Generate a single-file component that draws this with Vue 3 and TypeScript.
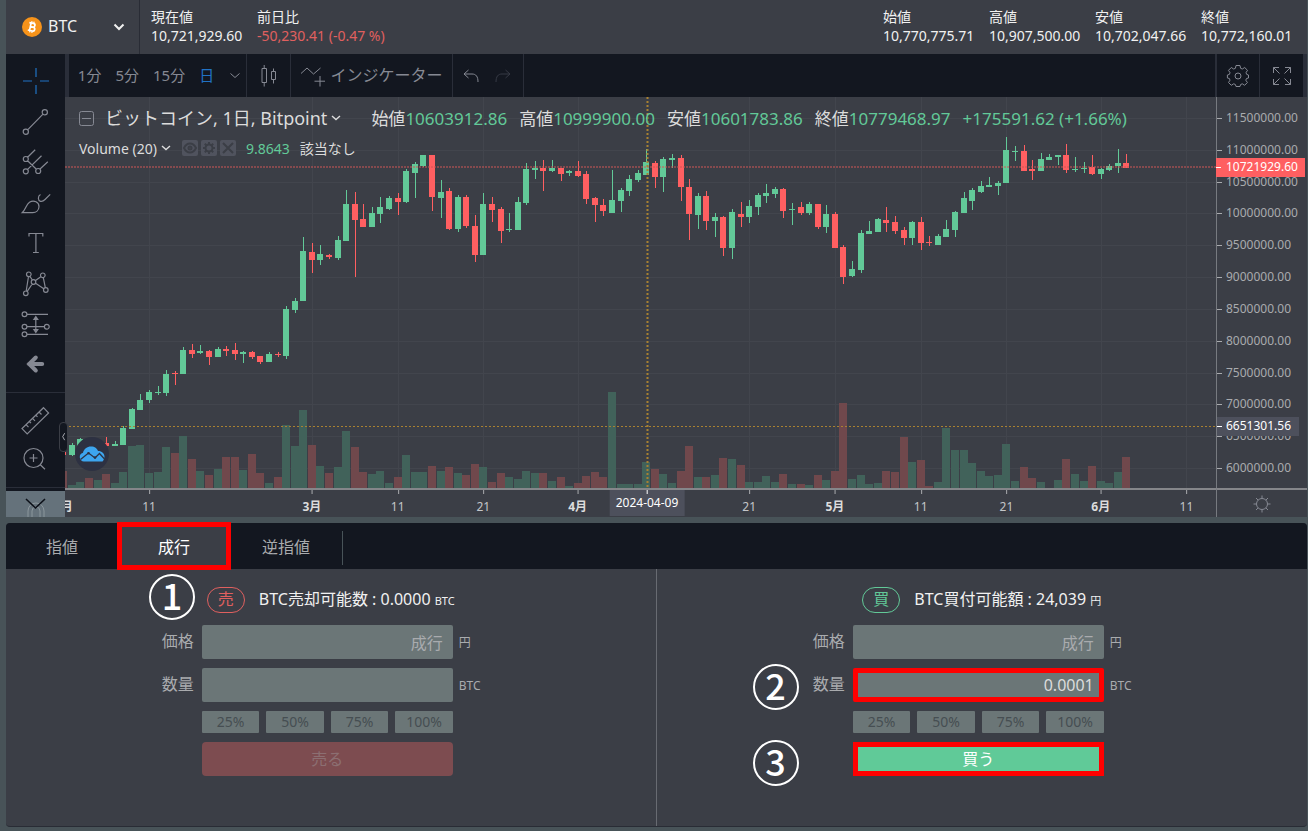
<script setup lang="ts">
import { ref } from 'vue'

type Candle = [top: number, bottom: number, high: number, low: number, up: 0 | 1, volume: number]

const PLOT_W = 1151
const PLOT_H = 391
const PLOT_TOP = 97
const STEP = 8.574
const FIRST_DAY = -10

// One entry per day: body top, body bottom, wick high, wick low, rising, volume bar top
const candles: Candle[] = [
  [452, 455, 451, 456, 0, 471], [445, 455, 443, 456, 1, 485], [439, 452, 438, 454, 1, 482], [440, 447, 438, 450, 0, 478],
  [441, 448, 439, 450, 1, 480], [443, 446, 437, 446, 0, 474], [444, 446, 441, 446, 1, 483], [428, 445, 426, 445, 1, 472],
  [409, 429, 408, 429, 1, 446], [400, 410, 394, 410, 1, 445], [392, 400, 390, 403, 1, 473], [392, 393, 386, 395, 1, 472],
  [374, 393, 370, 396, 1, 447], [373, 374, 371, 385, 0, 453], [350, 374, 347, 374, 1, 436], [350, 354, 344, 358, 0, 459],
  [351, 353, 345, 354, 1, 471], [351, 357, 350, 365, 0, 475], [349, 357, 347, 357, 1, 469], [349, 351, 346, 356, 0, 457],
  [350, 354, 343, 360, 0, 457], [352, 354, 351, 363, 1, 470], [352, 357, 351, 359, 0, 454], [356, 362, 356, 364, 0, 473],
  [354, 362, 352, 362, 1, 483], [354, 355, 352, 357, 0, 477], [309, 356, 306, 359, 1, 425], [301, 310, 298, 313, 1, 446],
  [251, 301, 237, 301, 1, 410], [252, 260, 243, 273, 0, 445], [254, 260, 245, 265, 1, 466], [255, 257, 254, 259, 0, 473],
  [240, 258, 236, 260, 1, 467], [204, 241, 190, 241, 1, 431], [204, 220, 192, 277, 0, 447], [219, 227, 204, 227, 0, 472],
  [213, 227, 207, 227, 1, 474], [207, 214, 197, 223, 1, 471], [198, 209, 196, 210, 1, 483], [198, 202, 193, 215, 0, 477],
  [171, 202, 169, 203, 1, 455], [164, 173, 162, 198, 1, 472], [155, 166, 155, 167, 1, 472], [155, 197, 155, 211, 0, 466],
  [192, 198, 180, 218, 1, 471], [191, 229, 188, 230, 0, 467], [197, 229, 195, 232, 1, 473], [197, 226, 195, 228, 0, 475],
  [226, 255, 215, 262, 0, 464], [204, 255, 193, 255, 1, 467], [204, 210, 197, 222, 0, 482], [209, 231, 207, 243, 0, 473],
  [229, 230, 213, 232, 1, 477], [202, 230, 197, 230, 1, 479], [169, 203, 163, 205, 1, 471], [168, 170, 161, 179, 1, 473],
  [168, 171, 160, 191, 0, 473], [168, 171, 160, 172, 1, 481], [168, 174, 168, 181, 0, 477], [171, 173, 170, 176, 1, 486],
  [171, 176, 161, 177, 0, 483], [174, 199, 171, 204, 0, 476], [198, 205, 197, 222, 0, 472], [205, 211, 199, 216, 0, 477],
  [200, 213, 170, 213, 1, 392], [190, 201, 188, 212, 1, 484], [179, 191, 175, 196, 1, 484], [173, 180, 170, 182, 1, 484],
  [162, 175, 149, 175, 1, 462], [163, 177, 161, 188, 0, 469], [159, 177, 157, 192, 1, 474], [158, 160, 154, 168, 1, 483],
  [158, 187, 155, 201, 0, 471], [187, 214, 179, 240, 0, 446], [196, 215, 193, 229, 1, 477], [196, 221, 191, 230, 0, 477],
  [217, 221, 213, 237, 1, 475], [217, 248, 216, 256, 0, 458], [212, 248, 209, 259, 1, 459], [214, 217, 202, 227, 0, 465],
  [206, 217, 200, 223, 1, 482], [195, 207, 193, 215, 1, 482], [193, 196, 184, 203, 1, 476], [189, 194, 187, 198, 1, 482],
  [189, 211, 188, 218, 0, 474], [209, 210, 203, 225, 1, 484], [207, 213, 202, 215, 0, 484], [204, 213, 202, 215, 1, 485],
  [204, 227, 204, 229, 0, 475], [214, 227, 205, 233, 1, 480], [214, 248, 212, 248, 0, 471], [247, 277, 245, 284, 0, 403],
  [269, 276, 261, 277, 1, 479], [233, 270, 230, 273, 1, 475], [231, 234, 221, 234, 1, 484], [219, 232, 218, 232, 1, 483],
  [220, 223, 207, 232, 0, 471], [222, 231, 216, 234, 0, 472], [230, 238, 227, 245, 0, 437], [222, 238, 221, 245, 1, 462],
  [222, 243, 217, 250, 0, 460], [242, 243, 236, 246, 0, 486], [236, 245, 234, 245, 1, 482], [229, 237, 220, 237, 1, 428],
  [212, 230, 211, 237, 1, 450], [198, 213, 192, 213, 1, 450], [190, 201, 188, 210, 1, 463], [186, 192, 181, 193, 1, 471],
  [185, 187, 177, 187, 1, 476], [183, 186, 181, 195, 1, 475], [150, 183, 137, 183, 1, 444], [151, 152, 146, 161, 1, 481],
  [151, 171, 145, 171, 0, 467], [169, 171, 160, 180, 0, 478], [159, 171, 153, 171, 1, 482], [157, 160, 154, 160, 1, 488],
  [155, 157, 155, 165, 1, 480], [155, 170, 144, 173, 0, 459], [169, 170, 157, 172, 1, 474], [168, 169, 162, 173, 1, 481],
  [167, 174, 155, 175, 0, 466], [169, 174, 168, 179, 1, 481], [166, 170, 164, 171, 1, 483], [163, 166, 149, 173, 1, 472],
  [163, 168, 154, 168, 0, 457],
]

const dayX = (day: number) => 84 + day * STEP
const candleX = (i: number) => Math.round(dayX(i + FIRST_DAY))

const prices = Array.from({ length: 12 }, (_, i) => ({
  text: (11500000 - i * 500000).toFixed(2),
  y: 118 - PLOT_TOP + i * 31.82,
}))
const dates = [
  { text: '2月', day: -10, bold: true },
  { text: '11', day: 0 },
  { text: '3月', day: 19, bold: true },
  { text: '11', day: 29 },
  { text: '21', day: 39 },
  { text: '4月', day: 50, bold: true },
  { text: '21', day: 70 },
  { text: '5月', day: 80, bold: true },
  { text: '11', day: 90 },
  { text: '21', day: 100 },
  { text: '6月', day: 111, bold: true },
  { text: '11', day: 121 },
]
const topPct = (y: number) => ({ top: `${(y / PLOT_H) * 100}%` })
const leftPct = (x: number) => ({ left: `${(x / PLOT_W) * 100}%` })

const summary = [
  { label: '始値', value: '10,770,775.71' },
  { label: '高値', value: '10,907,500.00' },
  { label: '安値', value: '10,702,047.66' },
  { label: '終値', value: '10,772,160.01' },
]
const ohlc = [
  { label: '始値', value: '10603912.86' },
  { label: '高値', value: '10999900.00' },
  { label: '安値', value: '10601783.86' },
  { label: '終値', value: '10779468.97' },
]

const tools = [
  { name: '十字線', cls: 'on', d: 'M16 3v9M16 20v9M3 16h9M20 16h9' },
  { name: 'トレンドライン', d: 'M7.6 23.8L23 8.2M8.4 25.7a2.6 2.6 0 1 1-5.2 0a2.6 2.6 0 1 1 5.2 0M27.4 6.3a2.6 2.6 0 1 1-5.2 0a2.6 2.6 0 1 1 5.2 0' },
  { name: 'ピッチフォーク', d: 'M7.6 11.2l7.6-7.5M7.6 23.4L21.5 9.7M20 23l7.8-7.3M7.6 14.8l8.8 8.4M8.3 13a2.5 2.5 0 1 1-5 0a2.5 2.5 0 1 1 5 0M8.3 25.3a2.5 2.5 0 1 1-5 0a2.5 2.5 0 1 1 5 0M20.7 25a2.5 2.5 0 1 1-5 0a2.5 2.5 0 1 1 5 0' },
  { name: 'ブラシ', d: 'M2.2 25.7C6 22 6 17.500 9.500 15.200C14 12.300 19.200 15.500 19 19.800C18.800 23.500 16 25.700 12.800 25.700ZM20.500 7.500C17.500 9 17.800 13.500 20.500 14.300C22.500 15 24 13.500 25 12.500L30.200 7.300' },
  { name: 'テキスト', d: 'M9 9.500V6.500H22.800V9.500M15.900 6.500V25.500M13 25.500h5.800' },
  { name: 'パターン', d: 'M8.500 8.500L6.200 23M7.200 23.400L12.200 16M9.900 8.300L12.400 12M15.500 12.600L20.800 8.800M15.600 15.300L23.800 20.800M23.300 9.700L25.300 19.600M11.100 6.300a2.300 2.300 0 1 1-4.600 0a2.300 2.300 0 1 1 4.600 0M8.100 25.300a2.300 2.300 0 1 1-4.600 0a2.300 2.300 0 1 1 4.600 0M15.800 14a2.300 2.300 0 1 1-4.600 0a2.300 2.300 0 1 1 4.600 0M25.100 7.300a2.300 2.300 0 1 1-4.600 0a2.300 2.300 0 1 1 4.600 0M28.100 22a2.300 2.300 0 1 1-4.600 0a2.300 2.300 0 1 1 4.600 0' },
  { name: '予測', d: 'M7 6.300H28M7 18.700H24.400M7 26.300H28M6.900 6.300a2.400 2.400 0 1 1-4.800 0a2.400 2.400 0 1 1 4.800 0M6.900 18.700a2.400 2.400 0 1 1-4.800 0a2.400 2.400 0 1 1 4.800 0M29.200 18.700a2.400 2.400 0 1 1-4.800 0a2.400 2.400 0 1 1 4.800 0M6.900 26.300a2.400 2.400 0 1 1-4.800 0a2.400 2.400 0 1 1 4.800 0M15.800 9v15M13.800 11.500l2-3l2 3zM13.800 21.500l2 3l2-3z' },
  { name: 'アイコン', cls: 'thick', d: 'M22.200 15H9M15.800 8.500L9.200 15l6.600 6.500' },
]

const coin = ref('BTC')
const tabs = ['指値', '成行', '逆指値']
const activeTab = ref(1)
const orders = [
  { side: 'sell', badge: '売', title: 'BTC売却可能数 :', amount: '0.0000', unit: 'BTC', quantity: '', action: '売る' },
  { side: 'buy', badge: '買', title: 'BTC買付可能額 :', amount: '24,039', unit: '円', quantity: '0.0001', action: '買う' },
]
const ratios = ['25%', '50%', '75%', '100%']
</script>

<template>
  <div class="page">
    <header class="head">
      <div class="coin">
        <svg class="coin-icon" viewBox="0 0 20 20" aria-hidden="true">
          <circle cx="10" cy="10" r="10" fill="#f7931a" />
          <g fill="none" stroke="#fff" stroke-width="1.700" transform="rotate(12 10 10)">
            <path d="M6.500 6.200H10.700a1.800 1.800 0 0 1 0 3.700H8M8 9.900h3.200a1.950 1.950 0 0 1 0 3.900H6.500M8.300 6v8" />
            <path d="M8.800 4.300v2M11 4.300v2M8.800 13.700v2M11 13.700v2" stroke-width="1.200" />
          </g>
        </svg>
        <select v-model="coin" class="coin-select" aria-label="銘柄">
          <option>BTC</option>
        </select>
        <svg class="coin-arrow" viewBox="0 0 12 8" aria-hidden="true"><path d="M1.500 1.500L6 6l4.500-4.500" /></svg>
      </div>
      <dl class="stats">
        <div><dt>現在値</dt><dd>10,721,929.60</dd></div>
        <div><dt>前日比</dt><dd class="down">-50,230.41 (-0.47 %)</dd></div>
      </dl>
      <dl class="stats right">
        <div v-for="s in summary" :key="s.label"><dt>{{ s.label }}</dt><dd>{{ s.value }}</dd></div>
      </dl>
    </header>

    <main class="work">
      <aside class="side">
        <div class="tools">
          <button v-for="t in tools" :key="t.name" class="tool" :class="t.cls" :aria-label="t.name">
            <svg viewBox="0 0 31 30"><path :d="t.d" /></svg>
          </button>
        </div>
        <div class="tools lower">
          <button class="tool" aria-label="計測">
            <svg viewBox="0 0 31 30">
              <path d="M23.500 1.700L28.600 7L7.200 28L2 22.600ZM6 18.700l2.500 2.500M9.300 15.500l1.700 1.700M12.500 12.300l2.500 2.500M15.800 9.200l1.700 1.700M19 6l2.500 2.500" />
            </svg>
          </button>
          <button class="tool" aria-label="ズーム">
            <svg viewBox="0 0 31 30">
              <circle cx="13.500" cy="13" r="9.500" /><path d="M20.300 19.800l4.700 4.500M9.500 13h8M13.500 9v8" />
            </svg>
          </button>
        </div>
        <button class="more" aria-label="ツールを隠す">
          <svg viewBox="0 0 59 26">
            <path d="M22 26V20a8 8 0 0 1 16 0V26M26 26V20a4 4 0 0 1 8 0V26" stroke="#8b969c" />
            <path d="M20 8l9.500 9L39 8" stroke="#0c1018" stroke-width="1.600" />
          </svg>
        </button>
        <button class="fold" aria-label="パネルを閉じる">
          <svg viewBox="0 0 9 30"><path d="M6 10.500L3.500 15L6 19.500" /></svg>
        </button>
      </aside>

      <section class="chart">
        <nav class="bar">
          <div class="cell times">
            <button>1分</button><button>5分</button><button>15分</button><button class="on">日</button>
            <button aria-label="時間足"><svg class="chev" viewBox="0 0 10 6"><path d="M.5 .5L5 4.500L9.500 .5" /></svg></button>
          </div>
          <button class="cell kind" aria-label="チャートタイプ">
            <svg width="18" height="24" viewBox="0 0 18 24">
              <path d="M2 4.500h4.500v14H2zM4.200 1v3.500M4.200 18.500v4M11.500 7.500h4v8h-4zM13.500 4.500v3M13.500 15.500v4" />
            </svg>
          </button>
          <button class="cell ind">
            <svg width="26" height="24" viewBox="0 0 26 24">
              <path d="M1 9.500l6-5.500l6.500 6L20.500 4M20 12v10.500M14.500 17.200h10.500" />
            </svg>
            インジケーター
          </button>
          <div class="cell undo">
            <button aria-label="元に戻す"><svg width="16" height="14" viewBox="0 0 16 14"><path d="M5.500 1L1 5l4.500 4M1 5h8c4 0 6 2.500 6 8" /></svg></button>
            <button aria-label="やり直す" disabled><svg width="16" height="14" viewBox="0 0 16 14"><path d="M10.500 1L15 5l-4.500 4M15 5H7C3 5 1 7.500 1 13" /></svg></button>
          </div>
          <div class="cell filler"></div>
          <button class="cell gear" aria-label="設定">
            <svg width="24" height="24" viewBox="0 0 24 24">
              <circle cx="12" cy="12" r="3" />
              <path d="M10 1.500h4l.6 2.800 1.700.7 2.400-1.500 2.800 2.800L20 8.700l.7 1.700 1.800.6v3l-2 .5-.7 1.700 1.600 2.300-2.800 2.800-2.300-1.500-1.700.7-.6 2h-4l-.6-2-1.700-.7-2.400 1.500-2.800-2.800L4 16.200l-.6-1.700-2-.5v-3l2-.6L4 8.700 2.500 6.300l2.800-2.800L7.700 5l1.700-.7z" />
            </svg>
          </button>
          <button class="cell full" aria-label="全画面">
            <svg width="20" height="20" viewBox="0 0 20 20">
              <path d="M1.500 7V1.500H7M1.500 1.500l6 6M13 1.500h5.500V7M18.500 1.500l-6 6M1.500 13v5.500H7M1.500 18.500l6-6M18.500 13v5.500H13M18.500 18.500l-6-6" />
            </svg>
          </button>
        </nav>

        <div class="board">
          <div class="plot">
            <svg class="series" :viewBox="`0 ${PLOT_TOP} ${PLOT_W} ${PLOT_H}`" preserveAspectRatio="none" role="img" aria-label="ビットコイン日足チャート">
              <g stroke="#42454d">
                <line v-for="p in prices" :key="p.text" x1="0" :x2="PLOT_W" :y1="Math.round(p.y + PLOT_TOP) + 0.5" :y2="Math.round(p.y + PLOT_TOP) + 0.5" />
                <line v-for="d in dates" :key="d.day" :x1="Math.round(dayX(d.day)) + 0.5" :x2="Math.round(dayX(d.day)) + 0.5" y1="97" y2="488" />
              </g>
              <rect v-for="(c, i) in candles" :key="'v' + i" :x="candleX(i) - 4" :y="c[5]" width="8" :height="488 - c[5]" :fill="c[4] ? '#41625a' : '#70484c'" />
              <g v-for="(c, i) in candles" :key="'c' + i" :fill="c[4] ? '#62c998' : '#ff5f61'">
                <rect :x="candleX(i)" :y="c[2]" width="1" :height="c[3] - c[2]" />
                <rect :x="candleX(i) - 3" :y="c[0]" width="6" :height="c[1] - c[0]" />
              </g>
              <path :d="`M0 167H${PLOT_W}`" stroke="#d05656" stroke-dasharray="2 1" />
              <path :d="`M0 426.500H${PLOT_W}`" stroke="#a98131" stroke-dasharray="2 2" />
              <path d="M582.500 97V488" stroke="#a98131" stroke-width="2" stroke-dasharray="2 2" />
            </svg>

            <div class="legend">
              <button class="collapse" aria-label="折りたたむ"><svg viewBox="0 0 15 15"><rect x=".5" y=".5" width="14" height="14" rx="2" /><path d="M3 7.500h9" /></svg></button>
              <span class="name">ビットコイン, 1日, Bitpoint</span>
              <svg class="chev" viewBox="0 0 10 6"><path d="M1 1L5 4.500L9 1" /></svg>
              <span class="ohlc">
                <span v-for="o in ohlc" :key="o.label">{{ o.label }}<b>{{ o.value }}</b></span>
                <b>+175591.62 (+1.66%)</b>
              </span>
            </div>
            <div class="legend study">
              <span>Volume (20)</span>
              <svg class="chev" viewBox="0 0 10 6"><path d="M1 1L5 4.500L9 1" /></svg>
              <span class="acts">
                <button aria-label="表示"><svg viewBox="0 0 16 16"><path d="M2 8c3-6 9-6 12 0c-3 6-9 6-12 0z" /><circle cx="8" cy="8" r="1.500" /></svg></button>
                <button aria-label="設定"><svg viewBox="0 0 16 16"><circle cx="8" cy="8" r="3.500" /><path d="M8 2v2.500M8 11.500V14M2 8h2.500M11.500 8H14M3.800 3.800l1.700 1.700M10.500 10.500l1.700 1.700M12.200 3.800l-1.700 1.700M5.500 10.500l-1.700 1.700" /></svg></button>
                <button aria-label="削除"><svg viewBox="0 0 16 16"><path d="M3 3l10 10M13 3L3 13" /></svg></button>
              </span>
              <b>9.8643</b>
              <span class="na">該当なし</span>
            </div>

            <div class="brand">
              <svg viewBox="0 0 26 16" aria-hidden="true">
                <path d="M5 15.500a4.500 4.500 0 0 1-1-8.800C5 3 8 .5 12 .5c4 0 6 2 7 4.500c4 0 6.500 2.500 6.500 5.500c0 2-.8 3.600-2 5z" fill="#3da5ef" />
                <path d="M1.500 13.500L9.500 7l6.500 5l4.500-4.500l5 5.500" fill="none" stroke="#2d3142" stroke-width="1.300" />
                <circle cx="9.500" cy="7.200" r="1.300" fill="#2d3142" /><circle cx="16" cy="11.500" r="1.300" fill="#2d3142" />
              </svg>
            </div>
          </div>

          <div class="prices">
            <span v-for="p in prices" :key="p.text" class="price" :style="topPct(p.y)">{{ p.text }}</span>
            <span class="price tag cross" :style="topPct(329)">6651301.56</span>
            <span class="price tag last" :style="topPct(70)">10721929.60</span>
          </div>

          <div class="dates">
            <span v-for="d in dates" :key="d.day" class="date" :class="{ bold: d.bold }" :style="leftPct(dayX(d.day))">{{ d.text }}</span>
            <span class="date tag" :style="leftPct(582)">2024-04-09</span>
          </div>
          <button class="corner" aria-label="軸の設定">
            <svg width="18" height="18" viewBox="0 0 18 18">
              <circle cx="9" cy="9" r="5.500" />
              <path d="M9 .5v3M9 14.500v3M.5 9h3M14.500 9h3M3 3l2.100 2.100M12.900 12.900L15 15M15 3l-2.100 2.100M5.100 12.900L3 15" />
            </svg>
          </button>
        </div>
      </section>
    </main>

    <section class="order">
      <div class="tabs" role="tablist">
        <button v-for="(t, i) in tabs" :key="t" role="tab" :aria-selected="activeTab === i" :class="{ active: activeTab === i }" @click="activeTab = i">{{ t }}</button>
      </div>
      <span class="step one">1</span>
      <div class="panes">
        <form v-for="o in orders" :key="o.side" class="pane" :class="o.side" @submit.prevent>
          <h2 class="title">
            <span class="badge">{{ o.badge }}</span>
            <span>{{ o.title }} {{ o.amount }} <small>{{ o.unit }}</small></span>
          </h2>
          <div class="row">
            <label :for="o.side + '-price'">価格</label>
            <input :id="o.side + '-price'" value="成行" disabled />
            <span class="unit">円</span>
          </div>
          <div class="row">
            <label :for="o.side + '-qty'">数量</label>
            <input :id="o.side + '-qty'" class="qty" :value="o.quantity" :disabled="o.side === 'sell'" />
            <span class="unit">BTC</span>
            <span v-if="o.side === 'buy'" class="step">2</span>
          </div>
          <div class="row">
            <div class="ratios"><button v-for="r in ratios" :key="r" type="button">{{ r }}</button></div>
          </div>
          <div class="row">
            <button class="submit" :disabled="o.side === 'sell'">{{ o.action }}</button>
            <span v-if="o.side === 'buy'" class="step three">3</span>
          </div>
        </form>
      </div>
    </section>
  </div>
</template>

<style>
body { margin: 0; background: #485358; }
</style>

<style scoped>
* { box-sizing: border-box; }
.page {
  display: flex;
  flex-direction: column;
  min-height: 100vh;
  padding: 0 1px 4px 6px;
  background: #485358;
  color: #f1f1f1;
  font: 14px/19px "Noto Sans", "Noto Sans CJK JP", sans-serif;
}
button { padding: 0; border: 0; background: none; color: inherit; font: inherit; }
svg { display: block; fill: none; stroke: currentColor; }
b { font-weight: 400; }

.head { display: flex; height: 54px; background: #3b3e46; }
.coin { position: relative; display: flex; align-items: center; width: 134px; padding-left: 16px; border-right: 1px solid #292c35; }
.coin-icon { width: 20px; height: 20px; stroke: none; }
.coin-select { flex: 1; align-self: stretch; padding: 0 0 2px 6px; border: 0; appearance: none; background: none; color: inherit; font: inherit; font-size: 16px; }
.coin-arrow { position: absolute; right: 14px; width: 12px; height: 8px; stroke-width: 2; pointer-events: none; }
.stats { display: flex; gap: 11px; margin: 0; padding: 7px 0 0 11px; }
.stats dd { margin: 0; white-space: nowrap; }
.stats > div { min-width: 95px; }
.stats.right { margin-left: auto; padding-right: 11px; }
.down { color: #e0605f; }

.work { display: flex; }
.side { position: relative; display: flex; flex-direction: column; width: 59px; padding-top: 6px; background: #131720; color: #868993; }
.tools { display: flex; flex-direction: column; height: 324px; }
.tool { display: grid; flex: 1; place-items: center; }
.tool svg { width: 31px; height: 30px; stroke-width: 1.2; }
.tool.on { color: #2172c4; }
.tool.thick svg { stroke-width: 4; stroke-linecap: round; }
.lower { height: 96px; margin-top: 8px; padding: 8px 0; border-top: 1px solid #2a2e39; }
.more { height: 26px; margin-top: auto; background: #65727b; }
.side::after { content: ""; position: absolute; right: 0; bottom: 29px; left: 0; height: 1px; background: #2a2e39; }
.fold { position: absolute; z-index: 2; top: 368px; right: -3px; width: 9px; height: 30px; border: 1px solid #3b3e46; border-radius: 4px; background: #131720; color: #d0d2d8; }

.chart { flex: 1; min-width: 0; background: #3b3e46; }
.bar { display: flex; gap: 1px; height: 43px; padding: 0 4px; background: #2a2e39; color: #868993; font-size: 15px; }
.cell { display: flex; align-items: center; justify-content: center; background: #131720; }
.times { width: 177px; gap: 14px; padding-left: 3px; }
.times .on { color: #2172c4; }
.times .chev { margin-left: 2px; }
.kind { width: 43px; }
.ind { width: 161px; gap: 4px; font-size: 16px; }
.undo { width: 70px; gap: 16px; padding-right: 2px; }
.undo button:disabled { color: #363a45; }
.filler { flex: 1; margin-right: 1px; }
.gear { width: 42px; }
.full { width: 43px; }
.chev { width: 10px; height: 6px; }

.board { display: grid; grid-template-columns: minmax(0, 1fr) 91px; grid-template-rows: 391px 29px; }
.plot { position: relative; overflow: hidden; }
.series { width: 100%; height: 100%; stroke: none; }
.legend { position: absolute; top: 10px; left: 14px; display: flex; align-items: center; height: 22px; color: #dcdcdc; font-size: 17px; white-space: nowrap; }
.legend .chev { margin-left: 4px; stroke-width: 1.4; }
.legend b { color: #62c998; }
.collapse svg { width: 15px; height: 15px; color: #868993; }
.name { margin-left: 11px; font-size: 18px; }
.ohlc { display: flex; gap: 12px; margin-left: 30px; }
.study { top: 40px; font-size: 14px; }
.acts { display: flex; gap: 3px; margin: 0 10px 0 11px; color: #3b3e46; }
.acts button { width: 16px; height: 16px; border-radius: 2px; background: #50535e; }
.acts svg { stroke-width: 2; }
.na { margin-left: 10px; }
.brand { position: absolute; bottom: 17px; left: 10px; display: grid; place-items: center; width: 34px; height: 34px; border-radius: 50%; background: #2d3142; }
.brand svg { width: 26px; height: 16px; stroke: none; }

.prices { position: relative; border-left: 1px solid #777a80; color: #a9abae; font-size: 12px; line-height: 18px; }
.price { position: absolute; left: 0; padding-left: 9px; margin-top: -9px; }
.price::before { content: ""; position: absolute; top: 9px; left: 0; width: 5px; height: 1px; background: currentColor; }
.price.tag { right: 8px; height: 19px; background: #4d505c; color: #fff; }
.price.last { right: 2px; left: -1px; padding-left: 10px; background: #ff5f61; }
.dates { position: relative; overflow: hidden; border-top: 2px solid #85868a; color: #c4c6c9; font-size: 12px; }
.date { position: absolute; top: 7px; transform: translateX(-50%); }
.date.bold { color: #dcdcdc; font-weight: 700; }
.date::before { content: ""; position: absolute; top: -7px; left: 50%; width: 1px; height: 4px; background: #a9abae; }
.date.tag { top: 0; padding: 3px 6px 4px; background: #4d505c; color: #fff; }
.date.tag::before { top: 0; background: #fff; }
.corner { display: grid; place-items: center; border-top: 2px solid #85868a; border-left: 1px solid #777a80; color: #868993; }

.order { position: relative; display: flex; flex: 1; flex-direction: column; margin-top: 6px; border-bottom: 1px solid #292c35; border-radius: 4px; background: #3b3e46; }
.tabs { display: flex; height: 46px; border-radius: 4px 4px 0 0; background: #131720; color: #a9abae; font-size: 16px; }
.tabs button { position: relative; width: 112px; padding-top: 2px; }
.tabs .active { outline: 5px solid #f00; outline-offset: -4px; background: #3b3e46; color: #fff; }
.tabs button:last-child::after { content: ""; position: absolute; top: 8px; right: -1px; bottom: 4px; width: 1px; background: #485358; }
.panes { display: grid; flex: 1; grid-template-columns: 1fr 1fr; }
.pane { display: flex; flex-direction: column; gap: 9px; padding: 17px 0 50px; color: #a9abae; font-size: 16px; }
.sell { border-right: 1px solid #686b72; }
.title { display: flex; align-items: center; justify-content: center; gap: 14px; height: 26px; margin: 0 0 4px; padding-top: 1px; color: #f1f1f1; font-size: 16px; font-weight: 400; }
.title small { font-size: 11px; }
.badge { width: 38px; height: 26px; border: 1px solid #e0605f; border-radius: 13px; color: #e0605f; line-height: 22px; text-align: center; }
.buy .badge { border-color: #62c998; color: #62c998; }
.row { position: relative; display: grid; grid-template-columns: 1fr 251px 1fr; align-items: center; padding-right: 7px; }
.row label { justify-self: end; margin-right: 8px; padding-bottom: 2px; }
.row input { grid-column: 2; width: 100%; height: 34px; padding: 0 10px; border: 0; border-radius: 2px; background: #6b7677; color: #a9abae; font: inherit; text-align: right; }
.buy .qty { border: 5px solid #f00; padding-right: 5px; color: #dcdcdc; }
.unit { margin-left: 6px; font-size: 12px; }
.ratios { display: grid; grid-column: 2; grid-template-columns: repeat(4, 1fr); gap: 7px; }
.ratios button { height: 22px; padding-bottom: 2px; border-radius: 1px; background: #6b7677; color: #464e52; font-size: 14px; }
.submit { grid-column: 2; height: 34px; border-radius: 4px; background: #7d4c50; color: #8c6f72; }
.buy .submit { border: 5px solid #f00; border-radius: 0; background: #60ca98; color: #fff; }
.step { position: absolute; display: grid; place-items: center; top: -4px; left: 96px; width: 46px; height: 46px; padding-bottom: 6px; border: 2px solid #fff; border-radius: 50%; color: #fff; font: 500 36px/36px "Noto Sans CJK JP", sans-serif; }
.step.three { top: -2px; }
.step.one { top: 51px; left: 143px; }
</style>
